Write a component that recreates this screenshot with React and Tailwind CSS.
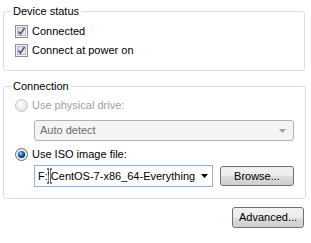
import React from 'react'

const font = { fontFamily: '"Liberation Sans", Arial, sans-serif' }

const CheckBox = () => (
  <svg width="13" height="13" viewBox="0 0 13 13" className="shrink-0">
    <defs>
      <linearGradient id="cbg" x1="0" y1="0" x2="1" y2="1">
        <stop offset="0" stopColor="#d8d8d8" />
        <stop offset="1" stopColor="#f7f7f7" />
      </linearGradient>
    </defs>
    <rect x="0.5" y="0.5" width="12" height="12" fill="#f4f4f4" stroke="#8f8f8f" />
    <rect x="2.5" y="2.5" width="8" height="8" fill="url(#cbg)" stroke="#b8b8b8" />
    <path d="M3.5 6.5 L5.5 9 L9.5 3" fill="none" stroke="#4a5f97" strokeWidth="1.7" />
  </svg>
)

const Radio = ({ checked }) => (
  <svg width="13" height="13" viewBox="0 0 13 13" className="shrink-0">
    <defs>
      <radialGradient id="rdis" cx="0.4" cy="0.35" r="0.7">
        <stop offset="0" stopColor="#ffffff" />
        <stop offset="1" stopColor="#e0e0e0" />
      </radialGradient>
      <radialGradient id="ron" cx="0.4" cy="0.35" r="0.6">
        <stop offset="0" stopColor="#9ed8ff" />
        <stop offset="0.5" stopColor="#1f73c8" />
        <stop offset="1" stopColor="#0b2f6b" />
      </radialGradient>
    </defs>
    {checked ? (
      <>
        <circle cx="6.5" cy="6.5" r="6" fill="#eaeaea" stroke="#6f6f6f" />
        <circle cx="6.5" cy="6.5" r="3.6" fill="url(#ron)" />
      </>
    ) : (
      <circle cx="6.5" cy="6.5" r="6" fill="url(#rdis)" stroke="#c6c6c6" />
    )}
  </svg>
)

const Button = ({ children, className = '' }) => (
  <button
    className={`rounded-[3px] border border-[#707070] bg-[linear-gradient(#f2f2f2_0%,#ebebeb_50%,#dddddd_50%,#cfcfcf_100%)] text-[11px] text-black leading-none ${className}`}
  >
    {children}
  </button>
)

export default function App() {
  return (
    <div className="w-[311px] h-[243px] bg-white text-[11px] text-black overflow-hidden" style={font}>
      <div className="pt-[4px] pl-[3px] w-[305px] flex flex-col">
        <fieldset className="border border-[#d5dfe5] rounded-[3px] h-[67px] px-[11px]">
          <legend className="px-[2px] -ml-[4px] leading-[14px]">Device status</legend>
          <div className="flex flex-col gap-[6px] pt-[7px]">
            <label className="flex items-center gap-[4px] h-[13px]">
              <CheckBox />
              <span>Connected</span>
            </label>
            <label className="flex items-center gap-[4px] h-[13px]">
              <CheckBox />
              <span>Connect at power on</span>
            </label>
          </div>
        </fieldset>

        <fieldset className="mt-[8px] border border-[#d5dfe5] rounded-[3px] h-[120px] pl-[11px] pr-[11px]">
          <legend className="px-[2px] -ml-[4px] leading-[14px]">Connection</legend>
          <div className="flex flex-col pt-[6px]">
            <label className="flex items-center gap-[4px] h-[13px] text-[#a0a0a0]">
              <Radio checked={false} />
              <span>Use physical drive:</span>
            </label>
            <div className="mt-[8px] ml-[19px] h-[21px] rounded-[3px] border border-[#adb2b5] bg-[#f4f4f4] flex items-center justify-between pl-[5px] pr-[7px] text-[#6d6d6d]">
              <span>Auto detect</span>
              <svg width="7" height="4" viewBox="0 0 7 4"><path d="M0 0 H7 L3.5 4 Z" fill="#a0a0a0" /></svg>
            </div>
            <label className="mt-[7px] flex items-center gap-[4px] h-[13px]">
              <Radio checked />
              <span>Use ISO image file:</span>
            </label>
            <div className="mt-[4px] ml-[19px] flex items-center gap-[7px]">
              <div className="relative w-[179px] h-[22px] border border-[#8fb3dc] bg-white flex items-center pl-[3px] pr-[4px]">
                <span className="flex-1 min-w-0 overflow-hidden whitespace-nowrap">F:\CentOS-7-x86_64-Everything</span>
                <svg width="7" height="4" viewBox="0 0 7 4" className="ml-[4px] shrink-0"><path d="M0 0 H7 L3.5 4 Z" fill="#000" /></svg>
                <svg width="7" height="16" viewBox="0 0 7 16" className="absolute left-[11px] top-[2px]">
                  <path d="M1 1 H3 V15 H1 M6 1 H4 V15 H6" fill="none" stroke="#000" strokeWidth="1" />
                  <path d="M3.5 1 V15" stroke="#ffffff" strokeWidth="1" />
                </svg>
              </div>
              <Button className="w-[74px] h-[20px]">Browse...</Button>
            </div>
          </div>
        </fieldset>

        <div className="flex justify-end mt-[8px] pr-[1px]">
          <Button className="w-[72px] h-[21px]">Advanced...</Button>
        </div>
      </div>
    </div>
  )
}
